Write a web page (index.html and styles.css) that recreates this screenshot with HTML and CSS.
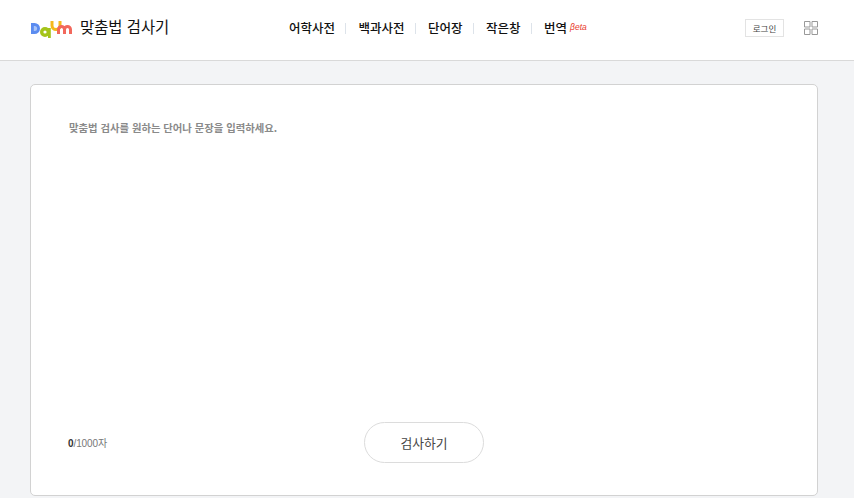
FILE: index.html
```html
<!DOCTYPE html>
<html lang="ko">
<head>
<meta charset="utf-8">
<title>맞춤법 검사기</title>
<link rel="stylesheet" href="styles.css">
</head>
<body>
<header class="top">
  <div class="brand">
    <svg class="logo" width="42" height="18" viewBox="0 0 42 18" aria-label="Daum">
      <path d="M0 2h3.500a5.500 5.500 0 0 1 0 11H0z" fill="#5b8cf0"/>
      <path d="M2.800 5h.8a2.500 2.500 0 0 1 0 5h-.8z" fill="#a9c4f7"/>
      <circle cx="14" cy="11" r="3.300" fill="none" stroke="#a5c41a" stroke-width="3.400"/>
      <path d="M18.400 7v10" stroke="#a5c41a" stroke-width="2.800"/>
      <path d="M21 0v4.500a4 4 0 0 0 8 0V0" fill="none" stroke="#f5b91c" stroke-width="3"/>
      <path d="M27.500 13V8.500a3 3 0 0 1 6 0V13M33.500 8.500a3 3 0 0 1 6 0V13" fill="none" stroke="#f2685c" stroke-width="3"/>
    </svg>
    <span class="brand-name">맞춤법 검사기</span>
  </div>
  <nav class="gnb">
    <a class="gnb-item">어학사전</a><i class="sep"></i>
    <a class="gnb-item">백과사전</a><i class="sep"></i>
    <a class="gnb-item">단어장</a><i class="sep"></i>
    <a class="gnb-item">작은창</a><i class="sep"></i>
    <a class="gnb-item">번역<em class="beta">βeta</em></a>
  </nav>
  <div class="util">
    <button class="login">로그인</button>
    <svg class="apps" width="14" height="14" viewBox="0 0 14 14">
      <path d="M.5.5h5.500v5.500h-5.500zM8 .5h5.500v5.500h-5.500zM.5 8h5.500v5.500h-5.500zM8 8h5.500v5.500h-5.500z" fill="none" stroke="#999"/>
    </svg>
  </div>
</header>
<main class="page">
  <section class="card">
    <p class="hint">맞춤법 검사를 원하는 단어나 문장을 입력하세요.</p>
    <div class="foot">
      <div class="count"><b>0</b>/1000자</div>
      <button class="check">검사하기</button>
    </div>
  </section>
</main>
</body>
</html>
```
FILE: styles.css
```css
* { box-sizing: border-box; }
html, body { margin: 0; height: 100%; }
body {
  background: #f3f4f6;
  font-family: "Noto Sans CJK KR", "Liberation Sans", sans-serif;
  overflow: hidden;
}
.top {
  height: 61px;
  background: #fff;
  border-bottom: 1px solid #d9d9d9;
  display: flex;
  align-items: center;
  padding: 0 36px 4px 31px;
}
.brand { display: flex; align-items: center; gap: 7px; width: 258px; }
.logo { display: block; margin-top: 3px; }
.brand-name { font-size: 15.400px; color: #111; line-height: 20px; margin-top: -4px; }
.gnb { display: flex; align-items: center; flex: 1; }
.gnb-item { font-size: 12.500px; font-weight: 500; color: #111; line-height: 20px; display: flex; align-items: center; }
.sep { width: 1px; height: 11px; background: #dde3ea; margin: 1px 12.500px 0 10px; }
.beta { font: italic 8.500px "Liberation Sans", sans-serif; color: #e8392b; margin: 0 0 3px 3px; }
.util { display: flex; align-items: center; gap: 20px; }
.login {
  width: 39px; height: 18px; padding: 0;
  background: #fff; border: 1px solid #e3e3e3;
  font: 8.500px "Noto Sans CJK KR", sans-serif; color: #444;
}
.apps { display: block; }
.page { padding: 23px 36px 0 30px; }
.card {
  height: 412px;
  background: #fff;
  border: 1px solid #d2d2d2;
  border-radius: 5px;
  padding: 35px 37px 32px 38px;
  display: flex;
  flex-direction: column;
  justify-content: space-between;
}
.hint { margin: 0; font-size: 10.350px; font-weight: 700; line-height: 16px; color: #8a8a8a; }
.foot { display: flex; align-items: center; position: relative; height: 41px; }
.count { font: 10px "Liberation Sans", "Noto Sans CJK KR", sans-serif; letter-spacing: -0.1px; color: #777; margin-left: -1px; }
.count b { color: #333; }
.check {
  position: absolute; left: 295px; top: 0;
  width: 120px; height: 41px;
  background: #fff;
  border: 1px solid #dcdcdc;
  border-radius: 21px;
  font: 400 12.800px "Noto Sans CJK KR", sans-serif;
  color: #444;
}
```
